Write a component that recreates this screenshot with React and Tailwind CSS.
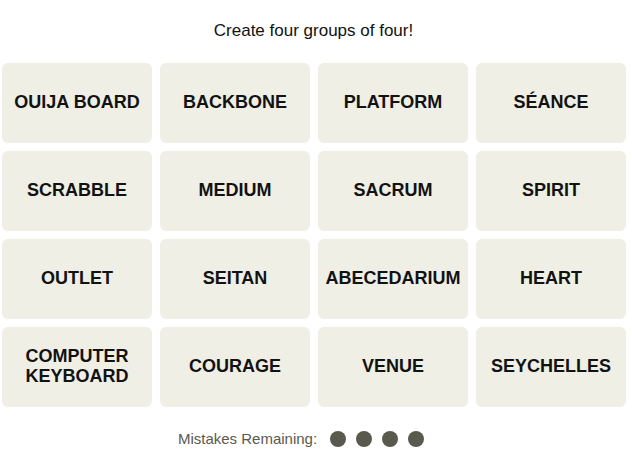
import React from "react";

const words = [
  "OUIJA BOARD", "BACKBONE", "PLATFORM", "SÉANCE",
  "SCRABBLE", "MEDIUM", "SACRUM", "SPIRIT",
  "OUTLET", "SEITAN", "ABECEDARIUM", "HEART",
  "COMPUTER KEYBOARD", "COURAGE", "VENUE", "SEYCHELLES",
];

const App = () => {
  return (
    <div className="w-[632px] h-[452px] bg-white font-['Liberation_Sans',Arial,sans-serif]">
      <p className="pt-[19px] h-[63px] text-center text-[17px] leading-[24px] text-[#121212] pr-[5px]">
        Create four groups of four!
      </p>
      <div className="ml-[2px] w-[624px] grid grid-cols-4 gap-2">
        {words.map((w) => (
          <div
            key={w}
            className="h-[80px] rounded-md bg-[#efefe6] flex items-center justify-center text-center px-2 pb-[2px] text-[18px] leading-[20px] font-bold text-[#121212]">
            {w}
          </div>
        ))}
      </div>
      <div className="mt-[21px] flex items-center justify-center gap-[13px] pr-[30px]">
        <span className="text-[15px] text-[#5a594e]">Mistakes Remaining:</span>
        <div className="flex gap-[10px]">
          {[0, 1, 2, 3].map((i) => (
            <span key={i} className="size-4 rounded-full bg-[#5a594e]" />
          ))}
        </div>
      </div>
    </div>
  );
};

export default App;
